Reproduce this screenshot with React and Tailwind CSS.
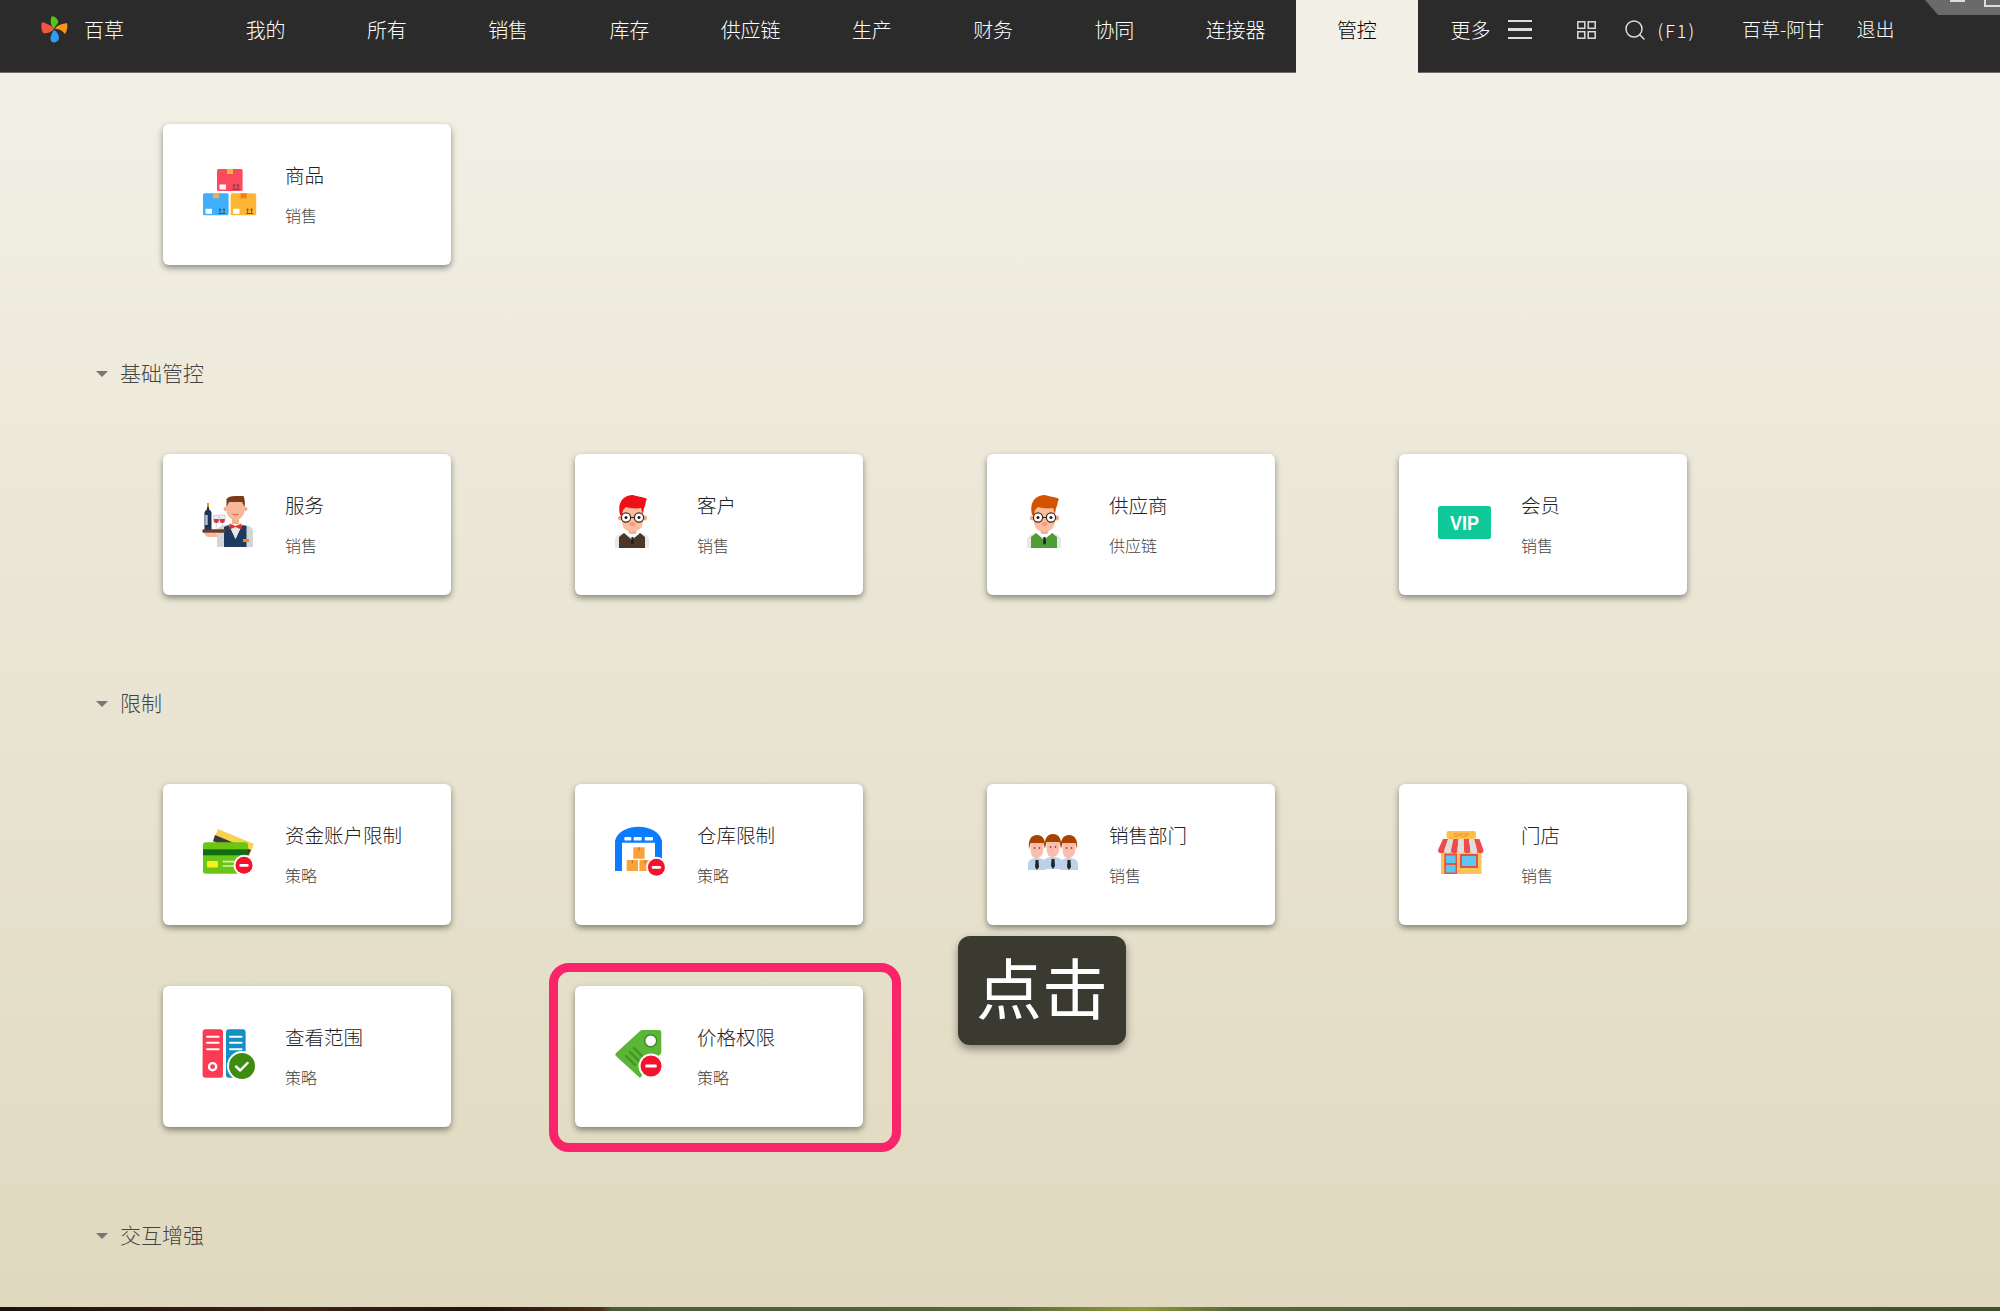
import React from 'react';
import { Search } from 'lucide-react';

const navItems = ['我的', '所有', '销售', '库存', '供应链', '生产', '财务', '协同', '连接器', '管控'];

function Logo() {
  return (
    <svg width="27" height="27" viewBox="0 0 27 27" className="shrink-0">
      <path d="M13 13 C9 9 9 3 11 0 C15 1 18 4 17 7 C16 9 14 10 13 13Z" fill="#57c21a" />
      <path d="M14 13 C16 9 21 8 26 7 C27 11 26 15 24 18 C21 14 18 13 14 13Z" fill="#f5961d" />
      <path d="M13 14 C17 16 18 20 18 23 C17 26 13 27 11 26 C8 24 10 18 13 14Z" fill="#2f9bf0" />
      <path d="M13 13 C10 17 5 18 2 17 C0 14 0 9 1 6 C5 7 10 9 13 13Z" fill="#f0563f" />
    </svg>
  );
}

function MinusBadge({ cx, cy, r = 9 }) {
  return (
    <g>
      <circle cx={cx} cy={cy} r={r + 2} fill="#fff" />
      <circle cx={cx} cy={cy} r={r} fill="#f5122d" />
      <rect x={cx - r * 0.55} y={cy - 1.4} width={r * 1.1} height="2.8" rx="1.2" fill="#fff" />
    </g>
  );
}

function Parcel({ x, y, color, tape }) {
  return (
    <g>
      <rect x={x} y={y} width="25.6" height="22" rx="1.5" fill={color} />
      <rect x={x + 10} y={y} width="6" height="5" fill={tape} />
      <rect x={x + 2.5} y={y + 15.5} width="6.5" height="5" fill="#fff" />
      <path d={`M${x + 17} ${y + 19.5}v-4m0 0l-1 1.4m1-1.4l1 1.4M${x + 21} ${y + 19.5}v-4m0 0l-1 1.4m1-1.4l1 1.4M${x + 15.5} ${y + 20.2}h7`} stroke="#444" strokeWidth="0.8" fill="none" />
    </g>
  );
}

function IconBoxes() {
  return (
    <g>
      <Parcel x={16} y={9} color="#fb4a5d" tape="#f9b33c" />
      <Parcel x={2} y={33.3} color="#3eaefd" tape="#e8b54d" />
      <Parcel x={29.6} y={33.3} color="#fdb535" tape="#fb7a12" />
    </g>
  );
}

function IconWaiter() {
  return (
    <g>
      <path d="M16 57V41q0-4 7-6l11 1 11-1q7 2 7 6v16z" fill="#d3d6d8" />
      <path d="M23 57V37l5-2 6.500 14 6.500-14 4.500 1V57z" fill="#1f3a5f" />
      <path d="M28 35l6.500 14 6.500-14-6.500 2z" fill="#e6e9ea" />
      <rect x="42" y="49" width="6" height="3" fill="#f28c1c" />
      <path d="M28.500 33.500l6 2.500 6-2.500v6l-6-2.500-6 2.500z" fill="#e0352b" />
      <rect x="31" y="27" width="7" height="7" fill="#f1b08e" />
      <circle cx="24.500" cy="19" r="2" fill="#f1a884" />
      <circle cx="44.500" cy="19" r="2" fill="#f1a884" />
      <ellipse cx="34.500" cy="18" rx="9.500" ry="12" fill="#f7b899" />
      <path d="M25.500 17V9q2-3 9-3h8q2 4 1 11l-2.500-5H28z" fill="#7a3b1a" />
      <path d="M31.500 24q3 2 6 0" stroke="#d9534f" strokeWidth="1" fill="none" />
      <path d="M6 13h2v6l2.500 3v18.500H3.500V22L6 19z" fill="#1d3557" />
      <rect x="6" y="13" width="2" height="4" fill="#f28c1c" />
      <rect x="4.200" y="25" width="2.500" height="10" fill="#b8c2cc" />
      <path d="M12.500 25h5.500v5q0 3-2.700 3t-2.800-3z" fill="#e9eef0" stroke="#aab" strokeWidth="0.4" />
      <path d="M18.500 25H24v5q0 3-2.700 3t-2.800-3z" fill="#e9eef0" stroke="#aab" strokeWidth="0.4" />
      <path d="M12.800 29h5v1q0 3-2.500 3t-2.500-3zM18.800 29h5v1q0 3-2.500 3t-2.500-3z" fill="#d9343f" />
      <path d="M15.300 33v6M21.300 33v6" stroke="#c4ccd0" strokeWidth="0.8" />
      <rect x="1.500" y="39.300" width="23" height="3.400" rx="1" fill="#6b3a1f" />
      <path d="M3 43h12q2 2 1 4H7q-3-1-4-4z" fill="#f7b899" />
    </g>
  );
}

function IconPerson({ hair, vest }) {
  return (
    <g>
      <path d="M2 58v-9q1-4 8-6l9 3 9-3q7 2 8 6v9z" fill="#e6e8ea" />
      <path d="M6 58V47l5-4 8 7 8-7 5 4v11z" fill={vest} />
      <rect x="15.500" y="38" width="8" height="6" fill="#f1b08e" />
      <path d="M15 42l4.500 4.500 4.500-4.500 2 2-6.500 4-6.500-4z" fill="#fff" />
      <path d="M18.500 47h2l.5 6-1.500 2-1.500-2z" fill="#1f2226" />
      <circle cx="7.500" cy="28" r="2.500" fill="#f1a884" />
      <circle cx="31.500" cy="28" r="2.500" fill="#f1a884" />
      <path d="M9 16h21v14q0 11-10.500 11.500T9 30z" fill="#fbbd9d" />
      <path d="M7 25C4 13 10 5 20 5c4 2 9 1 14 4-2 3-1 6-3 9l-1 6-2-6c-6 1-12 0-15-1l-3 3-1 5z" fill={hair} />
      <circle cx="13" cy="27.500" r="4.600" fill="#fff" stroke="#3a2a1e" strokeWidth="1.200" />
      <circle cx="26" cy="27.500" r="4.600" fill="#fff" stroke="#3a2a1e" strokeWidth="1.200" />
      <circle cx="13" cy="27.500" r="1.500" fill="#2a1c12" />
      <circle cx="26" cy="27.500" r="1.500" fill="#2a1c12" />
      <path d="M17.600 27.500h3.800" stroke="#3a2a1e" strokeWidth="1.100" />
      <ellipse cx="19.500" cy="34" rx="3" ry="2" fill="#f59a80" />
    </g>
  );
}

function IconVip() {
  return (
    <g>
      <rect x="1" y="16" width="53" height="33" rx="2.500" fill="#10c998" />
      <text x="13" y="40" textLength="29" lengthAdjust="spacingAndGlyphs" fill="#fff" fontSize="20" fontWeight="700" fontFamily="Liberation Sans, sans-serif">VIP</text>
    </g>
  );
}

function IconCard() {
  return (
    <g>
      <path d="M17 9l36 15-9 23-36-15z" fill="#f6d24f" />
      <path d="M14 15l36 15-3 6-35-15z" fill="#3c3a3e" />
      <rect x="2" y="22.300" width="45" height="31.400" rx="2.500" fill="#6bc613" />
      <rect x="2" y="29.300" width="45" height="6" fill="#0f6e12" />
      <rect x="6" y="41" width="11" height="6.500" rx="1" fill="#f8f01e" />
      <path d="M21.700 41.700h11.800M21.700 46h11.800" stroke="#d8f2b8" strokeWidth="1.700" />
      <MinusBadge cx={43} cy={45.300} r={8.500} />
    </g>
  );
}

function IconWarehouse() {
  return (
    <g>
      <path d="M2 51V21C4 12 14 6.700 25.500 6.700S47 12 49 21v30H42V22.700H9V51z" fill="#0a7cff" />
      <rect x="11.300" y="17" width="7" height="3.500" rx="1" fill="#fff" />
      <rect x="20.700" y="17" width="8" height="3.500" rx="1" fill="#fff" />
      <rect x="31.700" y="17" width="8.300" height="3.500" rx="1" fill="#fff" />
      <rect x="20.300" y="27.300" width="11.300" height="11.400" fill="#f8a23c" />
      <rect x="13.700" y="40" width="11.300" height="11" fill="#f8a23c" />
      <rect x="26.400" y="40" width="11" height="11" fill="#f8a23c" />
      <path d="M26 27.300v3.500M19.300 40v3.500M31.900 40v3.500" stroke="#c97a1e" strokeWidth="1.200" />
      <MinusBadge cx={43.400} cy={47.300} r={8.500} />
    </g>
  );
}

function TeamMember({ cx, cy, w = 9 }) {
  return (
    <g>
      <path d={`M${cx - w} ${cy + 25}v-7q1-4 ${w - 2}-5h4q${w - 3} 1 ${w - 2} 5v7z`} fill="#bcd2ea" />
      <path d={`M${cx - 1.500} ${cy + 15}h3l.5 7-2 3-2-3z`} fill="#20262e" />
      <path d={`M${cx - 6.500} ${cy - 3}h13v6q0 9-6.500 10t-6.500-10z`} fill="#fbbcae" />
      <path d={`M${cx - 8} ${cy + 4}c-1-9 2-14 8-14s9 5 8 14l-1.500-6c-3 0-9 0-13 0z`} fill="#a84300" />
      <circle cx={cx - 2.500} cy={cy + 3} r="0.800" fill="#3a2a1e" />
      <circle cx={cx + 2.500} cy={cy + 3} r="0.800" fill="#3a2a1e" />
    </g>
  );
}

function IconTeam() {
  return (
    <g>
      <TeamMember cx={12} cy={25} />
      <TeamMember cx={44} cy={25} />
      <TeamMember cx={28} cy={24} w={10} />
    </g>
  );
}

function IconShop() {
  // 遮阳棚：红白相间的条纹
  const stripes = [0, 1, 2, 3, 4, 5, 6];
  return (
    <g>
      <rect x="4" y="31" width="40.500" height="23" fill="#f9c35a" />
      <rect x="7.300" y="33.500" width="12.700" height="20.500" fill="#e5504a" />
      <rect x="9" y="35.500" width="9.500" height="7.500" fill="#5cc8ee" />
      <rect x="9" y="45" width="9.500" height="7.500" fill="#5cc8ee" />
      <rect x="23" y="34" width="18" height="14" fill="#e5504a" />
      <rect x="25" y="36" width="14" height="10" fill="#5cc8ee" />
      <rect x="9.600" y="11" width="29.400" height="8" rx="2" fill="#fcbf49" />
      <text x="24.300" y="17.300" textAnchor="middle" fontSize="5.500" fill="#ef7b2c" fontFamily="Liberation Sans, sans-serif">SHOP</text>
      {stripes.map((i) => {
        const topX = 6 + i * 5.2;
        const botX = 1 + i * 6.5;
        return (
          <path
            key={i}
            d={`M${topX} 19h5.200L${botX + 6.5} 30a3.250 3.250 0 0 1-6.500 0z`}
            fill={i % 2 === 0 ? '#ee4b4b' : '#dcdfdf'}
          />
        );
      })}
    </g>
  );
}

function IconBinders() {
  return (
    <g>
      <rect x="1.600" y="7.300" width="20.400" height="48.400" rx="3" fill="#fb3b52" />
      <path d="M6 14.700h11.600M6 20.700h11.600M6 27.300h11.600" stroke="#fff" strokeWidth="2" strokeLinecap="round" />
      <circle cx="11.600" cy="44.700" r="3.600" fill="#fb3b52" stroke="#fff" strokeWidth="2.400" />
      <rect x="25" y="7.300" width="19.600" height="48.400" rx="3" fill="#1190c4" />
      <path d="M29 14.700h11.600M29 20.700h11.600M29 27.300h11.600" stroke="#fff" strokeWidth="2" strokeLinecap="round" />
      <circle cx="41" cy="44" r="15" fill="#fff" />
      <circle cx="41" cy="44" r="13" fill="#3f8a10" />
      <path d="M35 44.500l4.200 4 7.300-7.500" stroke="#fff" strokeWidth="2.500" fill="none" strokeLinecap="round" strokeLinejoin="round" />
    </g>
  );
}

function IconTag() {
  return (
    <g>
      <path d="M29 8h17q2.300 0 2.300 2.300V31L27 56 3.500 34.500q-2-1.500-.5-3.500L27 9q1-1 2-1z" fill="#5bb635" />
      <circle cx="37.700" cy="18.700" r="6" fill="#fff" stroke="#3f8a24" strokeWidth="1.500" />
      <path d="M13 34l9 9M17 30l9 9M21 26l9 9" stroke="#47932a" strokeWidth="2.400" strokeLinecap="round" />
      <MinusBadge cx={38} cy={44} r={10.500} />
    </g>
  );
}

function Card({ icon, title, sub, children }) {
  return (
    <div className="relative h-[141px] w-[288px] rounded-md bg-white shadow-[0_3px_6px_rgba(0,0,0,0.42)]">
      <div className="flex h-full">
        <div className="ml-[38px] mt-9 h-[60px] w-[60px] shrink-0">
          <svg width="60" height="60" viewBox="0 0 60 60">{icon}</svg>
        </div>
        <div className="ml-6 pt-[37px]">
          <div className="text-[19.500px] leading-7 text-[#222]">{title}</div>
          <div className="mt-[14px] text-base leading-6 text-[#444]">{sub}</div>
        </div>
      </div>
      {children}
    </div>
  );
}

function SectionTitle({ children }) {
  return (
    <div className="mt-[94px] mb-[65px] flex h-[30px] items-center pl-24 text-[21px] text-[#444]">
      <span className="mr-3 h-0 w-0 border-x-[6px] border-t-[6px] border-x-transparent border-t-[#777]" />
      <span className="-mt-[2px]">{children}</span>
    </div>
  );
}

function CardGrid({ children }) {
  return <div className="grid grid-cols-[repeat(4,288px)] gap-x-[124px] gap-y-[61px] pl-[163px]">{children}</div>;
}

export default function App() {
  return (
    <div className="relative h-[1311px] w-[2000px] overflow-hidden font-['Noto_Sans_CJK_SC','Liberation_Sans',sans-serif] font-light">
      {/* 顶部导航 */}
      <header className="relative z-10 flex h-[73px] items-stretch border-b border-[#6b6a65] bg-[#2b2b2b] text-white">
        <div className="flex w-[205px] items-center pb-[13px] pl-[41px]">
          <Logo />
          <span className="ml-4 text-xl">百草</span>
        </div>
        {navItems.map((item) => (
          <div
            key={item}
            className={`flex w-[121.250px] items-center justify-center pb-[13px] text-xl ${item === '管控' ? 'h-[73px] bg-[#f2f0e6] text-black' : ''}`}
          >
            {item}
          </div>
        ))}
        <div className="flex items-center pb-[13px]">
          <span className="ml-[33px] text-xl">更多</span>
          <span className="ml-[17px] flex w-6 flex-col gap-[6px]">
            <span className="h-[2.500px] bg-[#ddd]" />
            <span className="h-[2.500px] bg-[#ddd]" />
            <span className="h-[2.500px] bg-[#ddd]" />
          </span>
          <svg width="19" height="18" viewBox="0 0 19 18" className="ml-[45px]" fill="none" stroke="#ddd" strokeWidth="1.500">
            <rect x="0.800" y="0.800" width="7" height="6.500" />
            <rect x="11.200" y="0.800" width="7" height="6.500" />
            <rect x="0.800" y="10.700" width="7" height="6.500" />
            <rect x="11.200" y="10.700" width="7" height="6.500" />
          </svg>
          <Search size={24} strokeWidth={1.5} color="#ddd" className="ml-[27px]" />
          <span className="ml-[11px] text-lg tracking-[2px]">(F1)</span>
          <span className="ml-[46px] text-[19px]">百草-阿甘</span>
          <span className="ml-8 text-[19px]">退出</span>
        </div>
        {/* 右上角窗口控件 */}
        <div className="absolute top-0 right-0 h-[15px] w-[75px] bg-[#6a6a6a] [clip-path:polygon(0_0,100%_0,100%_100%,13px_100%)]">
          <span className="absolute top-0 left-[25px] h-[2px] w-[15px] bg-[#ddd]" />
          <span className="absolute -top-[2px] left-[59px] h-[9px] w-[20px] border-2 border-[#ddd]" />
        </div>
      </header>

      <main className="h-[1234px] bg-linear-to-b from-[#f2f0e6] to-[#e0d9bf] pt-[51px]">
        <CardGrid>
          <Card icon={<IconBoxes />} title="商品" sub="销售" />
        </CardGrid>

        <SectionTitle>基础管控</SectionTitle>
        <CardGrid>
          <Card icon={<IconWaiter />} title="服务" sub="销售" />
          <Card icon={<IconPerson hair="#ef0f17" vest="#4a3728" />} title="客户" sub="销售" />
          <Card icon={<IconPerson hair="#d35400" vest="#4f9e35" />} title="供应商" sub="供应链" />
          <Card icon={<IconVip />} title="会员" sub="销售" />
        </CardGrid>

        <SectionTitle>限制</SectionTitle>
        <CardGrid>
          <Card icon={<IconCard />} title="资金账户限制" sub="策略" />
          <Card icon={<IconWarehouse />} title="仓库限制" sub="策略" />
          <Card icon={<IconTeam />} title="销售部门" sub="销售" />
          <Card icon={<IconShop />} title="门店" sub="销售" />
          <Card icon={<IconBinders />} title="查看范围" sub="策略" />
          <Card icon={<IconTag />} title="价格权限" sub="策略">
            {/* 高亮框和提示 */}
            <div className="absolute -top-[23px] -right-[38px] -bottom-[25px] -left-[26px] rounded-[20px] border-[9px] border-[#f9246a]" />
            <div className="absolute -top-[50px] left-[383px] flex h-[109px] w-[168px] items-center justify-center rounded-xl bg-[#3a3a31] pb-[10px] text-[66px] font-normal text-white shadow-[0_4px_8px_rgba(0,0,0,0.4)]">
              点击
            </div>
          </Card>
        </CardGrid>

        <SectionTitle>交互增强</SectionTitle>
      </main>

      {/* 底部露出的背景图 */}
      <div className="h-1 bg-[linear-gradient(90deg,#1d120d_0,#3a2416_15%,#20140e_24%,#4a2f1c_30%,#4b5c38_30.6%,#55653d_50%,#8f9a3e_57%,#55653d_62%,#3f4f30_100%)]" />
    </div>
  );
}
